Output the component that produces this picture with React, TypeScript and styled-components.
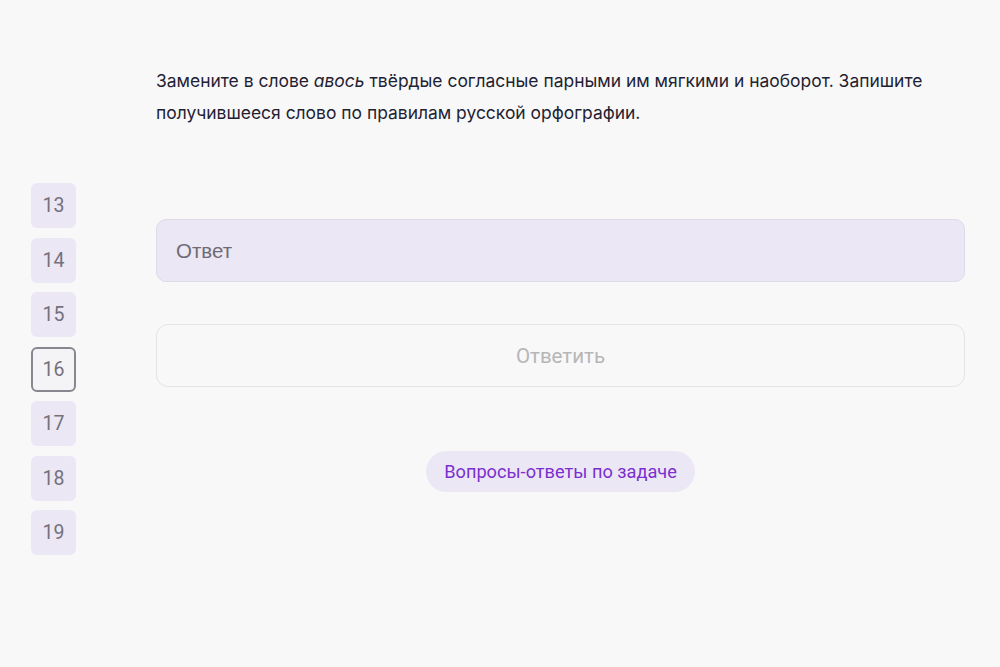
import React from 'react';
import styled, { createGlobalStyle } from 'styled-components';

const GlobalStyle = createGlobalStyle`
  html, body {
    margin: 0;
    padding: 0;
    background: #f8f8f8;
  }
  body {
    font-family: Roboto, "Liberation Sans", sans-serif;
  }
`;

const tasks = [13, 14, 15, 16, 17, 18, 19];

const App: React.FC = () => {
  return (
    <Page>
      <GlobalStyle />
      <TaskNav>
        {tasks.map((n) => (
          <TaskLink key={n} $active={n === 16}>
            {n}
          </TaskLink>
        ))}
      </TaskNav>
      <Main>
        <Question>
          Замените в слове <em>авось</em> твёрдые согласные парными им мягкими и наоборот. Запишите
          получившееся слово по правилам русской орфографии.
        </Question>
        <AnswerInput placeholder="Ответ" />
        <SubmitButton disabled>Ответить</SubmitButton>
        <FaqRow>
          <FaqPill>Вопросы-ответы по задаче</FaqPill>
        </FaqRow>
      </Main>
    </Page>
  );
};

export default App;

const Page = styled.div`
  width: 1000px;
  height: 667px;
  display: flex;
  flex-direction: row;
  align-items: flex-start;
  padding-left: 31px;
  box-sizing: border-box;
  overflow: hidden;
`;

const TaskNav = styled.nav`
  margin-top: 183px;
  display: flex;
  flex-direction: column;
  gap: 9.5px;
`;

const TaskLink = styled.div<{ $active?: boolean }>`
  width: 45px;
  height: 45px;
  box-sizing: border-box;
  border-radius: 6px;
  display: flex;
  align-items: center;
  justify-content: center;
  font-size: 19.5px;
  color: #74707c;
  background: ${({ $active }) => ($active ? '#f4f3f6' : '#ebe7f4')};
  border: ${({ $active }) => ($active ? '2px solid #8a8690' : 'none')};
`;

const Main = styled.main`
  margin-left: 80px;
  width: 809px;
  padding-top: 65px;
  display: flex;
  flex-direction: column;
`;

const Question = styled.p`
  margin: 0;
  font-family: Inter, "Liberation Sans", sans-serif;
  font-size: 17.45px;
  line-height: 32px;
  color: #1f2233;
  em {
    font-style: italic;
  }
`;

const AnswerInput = styled.input`
  margin-top: 90px;
  height: 63px;
  box-sizing: border-box;
  border: 1px solid #dedae8;
  border-radius: 10px;
  background: #ebe7f4;
  padding: 0 19px;
  font-family: "Liberation Sans", Arial, sans-serif;
  font-size: 20.5px;
  outline: none;
  &::placeholder {
    color: #6f6b76;
  }
`;

const SubmitButton = styled.button`
  margin-top: 42px;
  height: 63px;
  box-sizing: border-box;
  border: 1px solid #e4e4e4;
  border-radius: 12px;
  background: #f8f8f8;
  font-family: Roboto, "Liberation Sans", sans-serif;
  font-size: 20.5px;
  color: #b6b6b8;
`;

const FaqRow = styled.div`
  margin-top: 64px;
  display: flex;
  justify-content: center;
`;

const FaqPill = styled.div`
  height: 41px;
  padding: 0 18px;
  border-radius: 21px;
  background: #ebe7f4;
  display: flex;
  align-items: center;
  font-size: 18.2px;
  color: #7b2fd0;
`;
